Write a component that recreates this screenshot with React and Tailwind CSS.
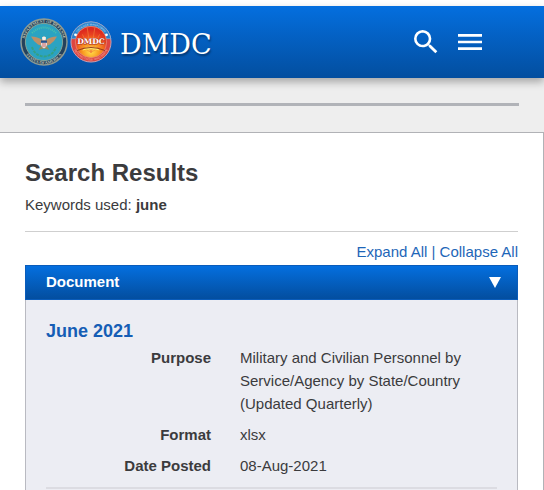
import React, { useState } from 'react';
import { MdSearch, MdMenu } from 'react-icons/md';

const DOCUMENTS = [
    {
        title: 'June 2021',
        fields: [
            { label: 'Purpose', value: 'Military and Civilian Personnel by Service/Agency by State/Country (Updated Quarterly)' },
            { label: 'Format', value: 'xlsx' },
            { label: 'Date Posted', value: '08-Aug-2021' },
        ],
    },
];

function DefenseSeal() {
    return (
        <svg viewBox="0 0 48 48" className="h-12 w-12" aria-hidden="true">
            <defs>
                <path id="seal-top" d="M4.6 24a19.4 19.4 0 0 1 38.8 0" />
                <path id="seal-bottom" d="M2 24a22 22 0 0 0 44 0" />
            </defs>
            <circle cx="24" cy="24" r="23" fill="#24415c" stroke="#8d9a92" strokeWidth="1.5" />
            <circle cx="24" cy="24" r="18.6" fill="#2ba3c2" stroke="#7fa39a" strokeWidth="1" />
            <g fill="#c3cbbb" fontFamily="Liberation Serif, serif" fontSize="4" fontWeight="bold">
                <text><textPath href="#seal-top" startOffset="50%" textAnchor="middle">DEPARTMENT OF DEFENSE</textPath></text>
                <text><textPath href="#seal-bottom" startOffset="50%" textAnchor="middle">STATES OF AMERICA</textPath></text>
            </g>
            <path d="M12 15q12-11 24 0" fill="none" stroke="#48bfae" strokeWidth="2" strokeDasharray="1 1" />
            <path d="M12 29q3 9 12 9.500q9-.5 12-9.500" fill="none" stroke="#35a083" strokeWidth="2" strokeDasharray="3 1" />
            {/* eagle with shield */}
            <path d="M11 18.500q7 .3 11 3.500l.5-3q1.500-1.200 3 0l.5 3q4-3.200 11-3.500l-3 4.500-4 3.500-4 1.500h-4l-4-1.500-4-3.500z" fill="#bd9068" />
            <path d="M21.500 27l-3 5 5.500-1.500 5.500 1.500-3-5z" fill="#8f8a5e" />
            <path d="M22 19.500q2-1.800 4 0l-.5 3h-3z" fill="#f4efe8" />
            <path d="M21 23h6v4q-.5 2.500-3 3.500q-2.500-1-3-3.500z" fill="#eadadd" />
            <path d="M21 22.500h6v2.300h-6z" fill="#27518a" />
            <path d="M23 25v4M25 25v4" stroke="#c65348" strokeWidth=".8" />
        </svg>
    );
}

function AgencySeal() {
    return (
        <svg viewBox="0 0 44 44" className="h-[42px] w-[42px]" aria-hidden="true">
            <defs>
                <radialGradient id="sun" cx=".5" cy=".8" r=".7">
                    <stop offset="0" stopColor="#ffe04a" />
                    <stop offset=".4" stopColor="#f8951f" />
                    <stop offset=".75" stopColor="#ea4420" />
                    <stop offset="1" stopColor="#dd2a1e" />
                </radialGradient>
                <path id="agency-top" d="M4.800 22a17.200 17.200 0 0 1 34.400 0" />
                <path id="agency-bottom" d="M2.600 22a19.400 19.400 0 0 0 38.800 0" />
            </defs>
            <circle cx="22" cy="22" r="21" fill="#dd4540" stroke="#c9a3b4" strokeWidth="1" />
            <path d="M1.300 18.500a21 21 0 0 1 41.400 0l-5 0a16 16 0 0 0-31.400 0z" fill="#2a80cc" stroke="#8fbce0" strokeWidth=".6" />
            <g fontFamily="Liberation Sans, sans-serif" fontSize="3">
                <text fill="#c2e2f4"><textPath href="#agency-top" startOffset="50%" textAnchor="middle">DEFENSE MANPOWER</textPath></text>
                <text fill="#f7b9a8"><textPath href="#agency-bottom" startOffset="50%" textAnchor="middle">SERVING THOSE WHO SERVE</textPath></text>
            </g>
            <circle cx="22" cy="22" r="16.400" fill="url(#sun)" stroke="#e58a78" strokeWidth=".8" />
            <path d="M22 33L8 24M22 33l-9-19M22 33l-4-26M22 33l4-26M22 33l9-19M22 33l14-9" stroke="#f2803a" strokeWidth=".7" />
            <path d="M13 31a9.500 6 0 0 1 18 0q-9-3-18 0z" fill="#fff06a" />
            <path d="M7.500 31q14.500-6.500 29 0" fill="none" stroke="#9c3a1c" strokeWidth="1.200" />
            <circle cx="5.800" cy="14.500" r="1.500" fill="#fff" />
            <circle cx="38.200" cy="14.500" r="1.500" fill="#fff" />
            <text x="22" y="24.500" textAnchor="middle" fill="#fff" stroke="#b0301f" strokeWidth="1" paintOrder="stroke" fontFamily="DejaVu Serif, serif" fontWeight="bold" fontSize="8">DMDC</text>
        </svg>
    );
}

function SiteHeader() {
    return (
        <header className="relative mt-1.5 flex h-18 items-center justify-between bg-linear-to-b from-[#046fdf] to-[#034e9f] pr-[58px] pl-5 shadow-[0_4px_8px_rgba(0,0,0,0.3)]">
            <a href="#" className="flex items-center gap-0.5 text-white">
                <DefenseSeal />
                <AgencySeal />
                <span className="pt-1.5 pl-1.5 font-['DejaVu_Serif',serif] text-[27px] leading-8 text-shadow-[1px_2px_2px_rgba(0,0,0,0.4)]">DMDC</span>
            </a>
            <div className="flex items-center gap-3 text-white">
                <button type="button" aria-label="Search"><MdSearch size={32} /></button>
                <button type="button" aria-label="Menu"><MdMenu size={32} /></button>
            </div>
        </header>
    );
}

function DocumentEntry({ doc }) {
    return (
        <article className="border-b-2 border-[#dcdce2] pb-2.5">
            <h2 className="text-lg leading-6 font-bold text-[#155db5]">
                <a href="#">{doc.title}</a>
            </h2>
            <dl className="mt-[3px] grid grid-cols-[165px_1fr] gap-x-[29px] gap-y-2 leading-[23px]">
                {doc.fields.map(field => (
                    <React.Fragment key={field.label}>
                        <dt className="text-right font-bold">{field.label}</dt>
                        <dd>{field.value}</dd>
                    </React.Fragment>
                ))}
            </dl>
        </article>
    );
}

export default function App() {
    const [isOpen, setIsOpen] = useState(true);

    return (
        <div className="flex min-h-screen flex-col bg-white font-['Liberation_Sans',Arial,sans-serif] text-[15px] text-[#3b3b3d]">
            <SiteHeader />

            <div className="bg-[#eee] px-[25px] pt-[25px] pb-[26px]">
                <hr className="border-t-3 border-[#b1b3b8]" />
            </div>

            <main className="flex flex-1 flex-col border-t border-r border-[#b1b2b6] px-[25px]">
                <h1 className="mt-6 text-2xl leading-8 font-bold">Search Results</h1>
                <p className="mt-1 leading-6">Keywords used: <strong>june</strong></p>
                <hr className="mt-3.5 border-[#cfcfcf]" />

                <div className="mt-2 text-right leading-6 text-[#1e66b8]">
                    <a href="#" onClick={() => setIsOpen(true)}>Expand All</a>
                    {' | '}
                    <a href="#" onClick={() => setIsOpen(false)}>Collapse All</a>
                </div>

                <section className="mt-px flex flex-1 flex-col">
                    <button
                        type="button"
                        aria-expanded={isOpen}
                        onClick={() => setIsOpen(!isOpen)}
                        className="flex h-[35px] items-center justify-between border border-[#0a5cba] bg-linear-to-b from-[#046fdf] to-[#034e9f] pr-4 pl-5 font-bold text-white"
                    >
                        Document
                        <svg viewBox="0 0 12 11" className="h-[11px] w-3" fill="currentColor" aria-hidden="true">
                            <path d="M0 0h12L6 11z" />
                        </svg>
                    </button>
                    {isOpen && (
                        <div className="flex-1 border-x border-[#b9bac1] bg-[#ecedf3] px-5 pt-[19px]">
                            {DOCUMENTS.map(doc => <DocumentEntry key={doc.title} doc={doc} />)}
                        </div>
                    )}
                </section>
            </main>
        </div>
    );
}
